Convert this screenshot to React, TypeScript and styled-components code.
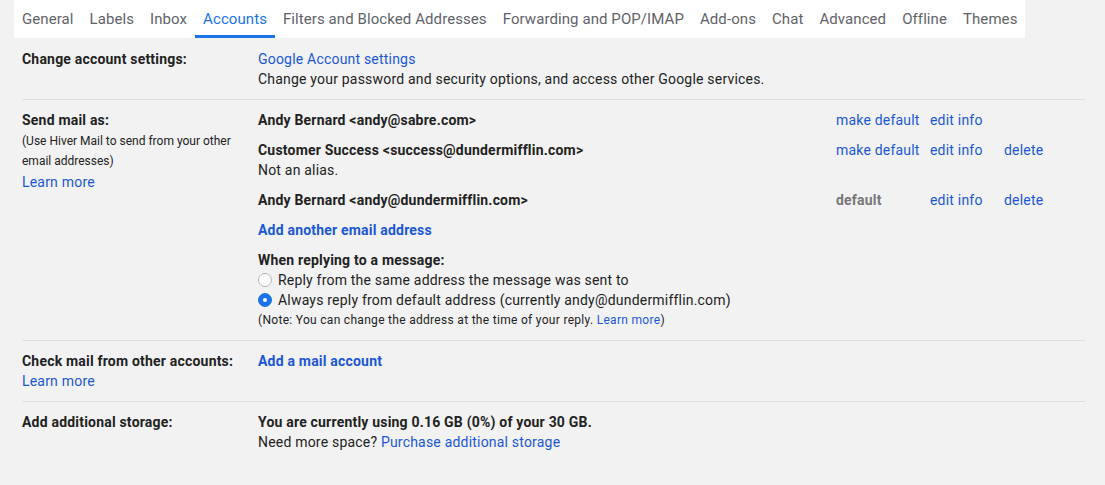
import React, { FC } from 'react';
import styled, { createGlobalStyle } from 'styled-components';

const GlobalStyle = createGlobalStyle`
  html, body {
    margin: 0;
    padding: 0;
    background: #f2f2f2;
  }
  body {
    font-family: Roboto, "Liberation Sans", Arial, sans-serif;
    font-size: 14px;
    letter-spacing: 0.2px;
    color: #222;
  }
`;

const Page = styled.div`
  min-height: 485px;
  background: #f2f2f2;
`;

const TabBar = styled.nav`
  display: inline-flex;
  margin-left: 14px;
  height: 38px;
  background: #fff;
`;

const Tab = styled.div<{ $active?: boolean }>`
  box-sizing: border-box;
  display: flex;
  align-items: center;
  height: 38px;
  padding: 2px 8px 0;
  font-size: 15px;
  letter-spacing: 0.08px;
  color: ${(p) => (p.$active ? '#1a73e8' : '#5f6368')};
  border-bottom: 3px solid ${(p) => (p.$active ? '#1a73e8' : 'transparent')};
  cursor: pointer;
`;

const Sections = styled.div`
  padding: 0 20px 0 22px;
`;

const Section = styled.div`
  display: grid;
  grid-template-columns: 236px 1fr;
  padding: 10px 0;
  line-height: 20px;

  &:first-child {
    padding-top: 11px;
  }

  &:not(:last-child) {
    border-bottom: 1px solid #e0e0e0;
  }
`;

const Label = styled.div`
  font-weight: 700;
  color: #222;
`;

const LabelCol = styled.div`
  display: flex;
  flex-direction: column;
`;

const Hint = styled.div`
  margin: 1px 0;
  font-size: 12px;
  line-height: 20px;
  letter-spacing: 0;
  color: #222;
`;

const Link = styled.a<{ $bold?: boolean }>`
  color: #1a57d6;
  text-decoration: none;
  font-weight: ${(p) => (p.$bold ? 700 : 400)};
  cursor: pointer;
`;

const ValueCol = styled.div`
  display: flex;
  flex-direction: column;
`;

const Block = styled.div`
  &:not(:last-child) {
    margin-bottom: 10px;
  }
`;

const AddressRow = styled.div`
  display: grid;
  grid-template-columns: 1fr 94px 74px 81px;
`;

const Address = styled.div`
  font-weight: 700;
`;

const DefaultTag = styled.span`
  font-weight: 700;
  color: #777;
`;

const RadioRow = styled.label`
  display: flex;
  align-items: center;
  gap: 6px;
  cursor: pointer;
`;

const Radio = styled.span<{ $checked?: boolean }>`
  box-sizing: border-box;
  width: 14px;
  height: 14px;
  border-radius: 50%;
  flex-shrink: 0;
  display: flex;
  align-items: center;
  justify-content: center;
  background: ${(p) => (p.$checked ? '#1a73e8' : '#fff')};
  border: 1px solid ${(p) => (p.$checked ? '#1a73e8' : '#b5b5b5')};

  &::after {
    content: '';
    display: ${(p) => (p.$checked ? 'block' : 'none')};
    width: 4px;
    height: 4px;
    border-radius: 50%;
    background: #fff;
  }
`;

const Note = styled.div`
  font-size: 12px;
  line-height: 20px;
  letter-spacing: 0.3px;
`;

const tabs = [
  'General',
  'Labels',
  'Inbox',
  'Accounts',
  'Filters and Blocked Addresses',
  'Forwarding and POP/IMAP',
  'Add-ons',
  'Chat',
  'Advanced',
  'Offline',
  'Themes',
];

interface AddressInfo {
  name: string;
  note?: string;
  isDefault?: boolean;
  canDelete?: boolean;
}

const addresses: AddressInfo[] = [
  { name: 'Andy Bernard <andy@sabre.com>' },
  {
    name: 'Customer Success <success@dundermifflin.com>',
    note: 'Not an alias.',
    canDelete: true,
  },
  {
    name: 'Andy Bernard <andy@dundermifflin.com>',
    isDefault: true,
    canDelete: true,
  },
];

const App: FC = () => {
  return (
    <Page>
      <GlobalStyle />
      <TabBar>
        {tabs.map((t) => (
          <Tab key={t} $active={t === 'Accounts'}>
            {t}
          </Tab>
        ))}
      </TabBar>

      <Sections>
        <Section>
          <Label>Change account settings:</Label>
          <ValueCol>
            <div>
              <Link>Google Account settings</Link>
            </div>
            <div>
              Change your password and security options, and access other
              Google services.
            </div>
          </ValueCol>
        </Section>

        <Section>
          <LabelCol>
            <Label>Send mail as:</Label>
            <Hint>(Use Hiver Mail to send from your other email addresses)</Hint>
            <div>
              <Link>Learn more</Link>
            </div>
          </LabelCol>
          <ValueCol>
            {addresses.map((a) => (
              <Block key={a.name}>
                <AddressRow>
                  <Address>{a.name}</Address>
                  <div>
                    {a.isDefault ? (
                      <DefaultTag>default</DefaultTag>
                    ) : (
                      <Link>make default</Link>
                    )}
                  </div>
                  <div>
                    <Link>edit info</Link>
                  </div>
                  <div>{a.canDelete && <Link>delete</Link>}</div>
                </AddressRow>
                {a.note && <div>{a.note}</div>}
              </Block>
            ))}
            <Block>
              <Link $bold>Add another email address</Link>
            </Block>
            <Block>
              <Label>When replying to a message:</Label>
              <RadioRow>
                <Radio />
                Reply from the same address the message was sent to
              </RadioRow>
              <RadioRow>
                <Radio $checked />
                Always reply from default address (currently
                andy@dundermifflin.com)
              </RadioRow>
              <Note>
                (Note: You can change the address at the time of your reply.{' '}
                <Link>Learn more</Link>)
              </Note>
            </Block>
          </ValueCol>
        </Section>

        <Section>
          <LabelCol>
            <Label>Check mail from other accounts:</Label>
            <div>
              <Link>Learn more</Link>
            </div>
          </LabelCol>
          <ValueCol>
            <div>
              <Link $bold>Add a mail account</Link>
            </div>
          </ValueCol>
        </Section>

        <Section>
          <Label>Add additional storage:</Label>
          <ValueCol>
            <Label>You are currently using 0.16 GB (0%) of your 30 GB.</Label>
            <div>
              Need more space? <Link>Purchase additional storage</Link>
            </div>
          </ValueCol>
        </Section>
      </Sections>
    </Page>
  );
};

export default App;
